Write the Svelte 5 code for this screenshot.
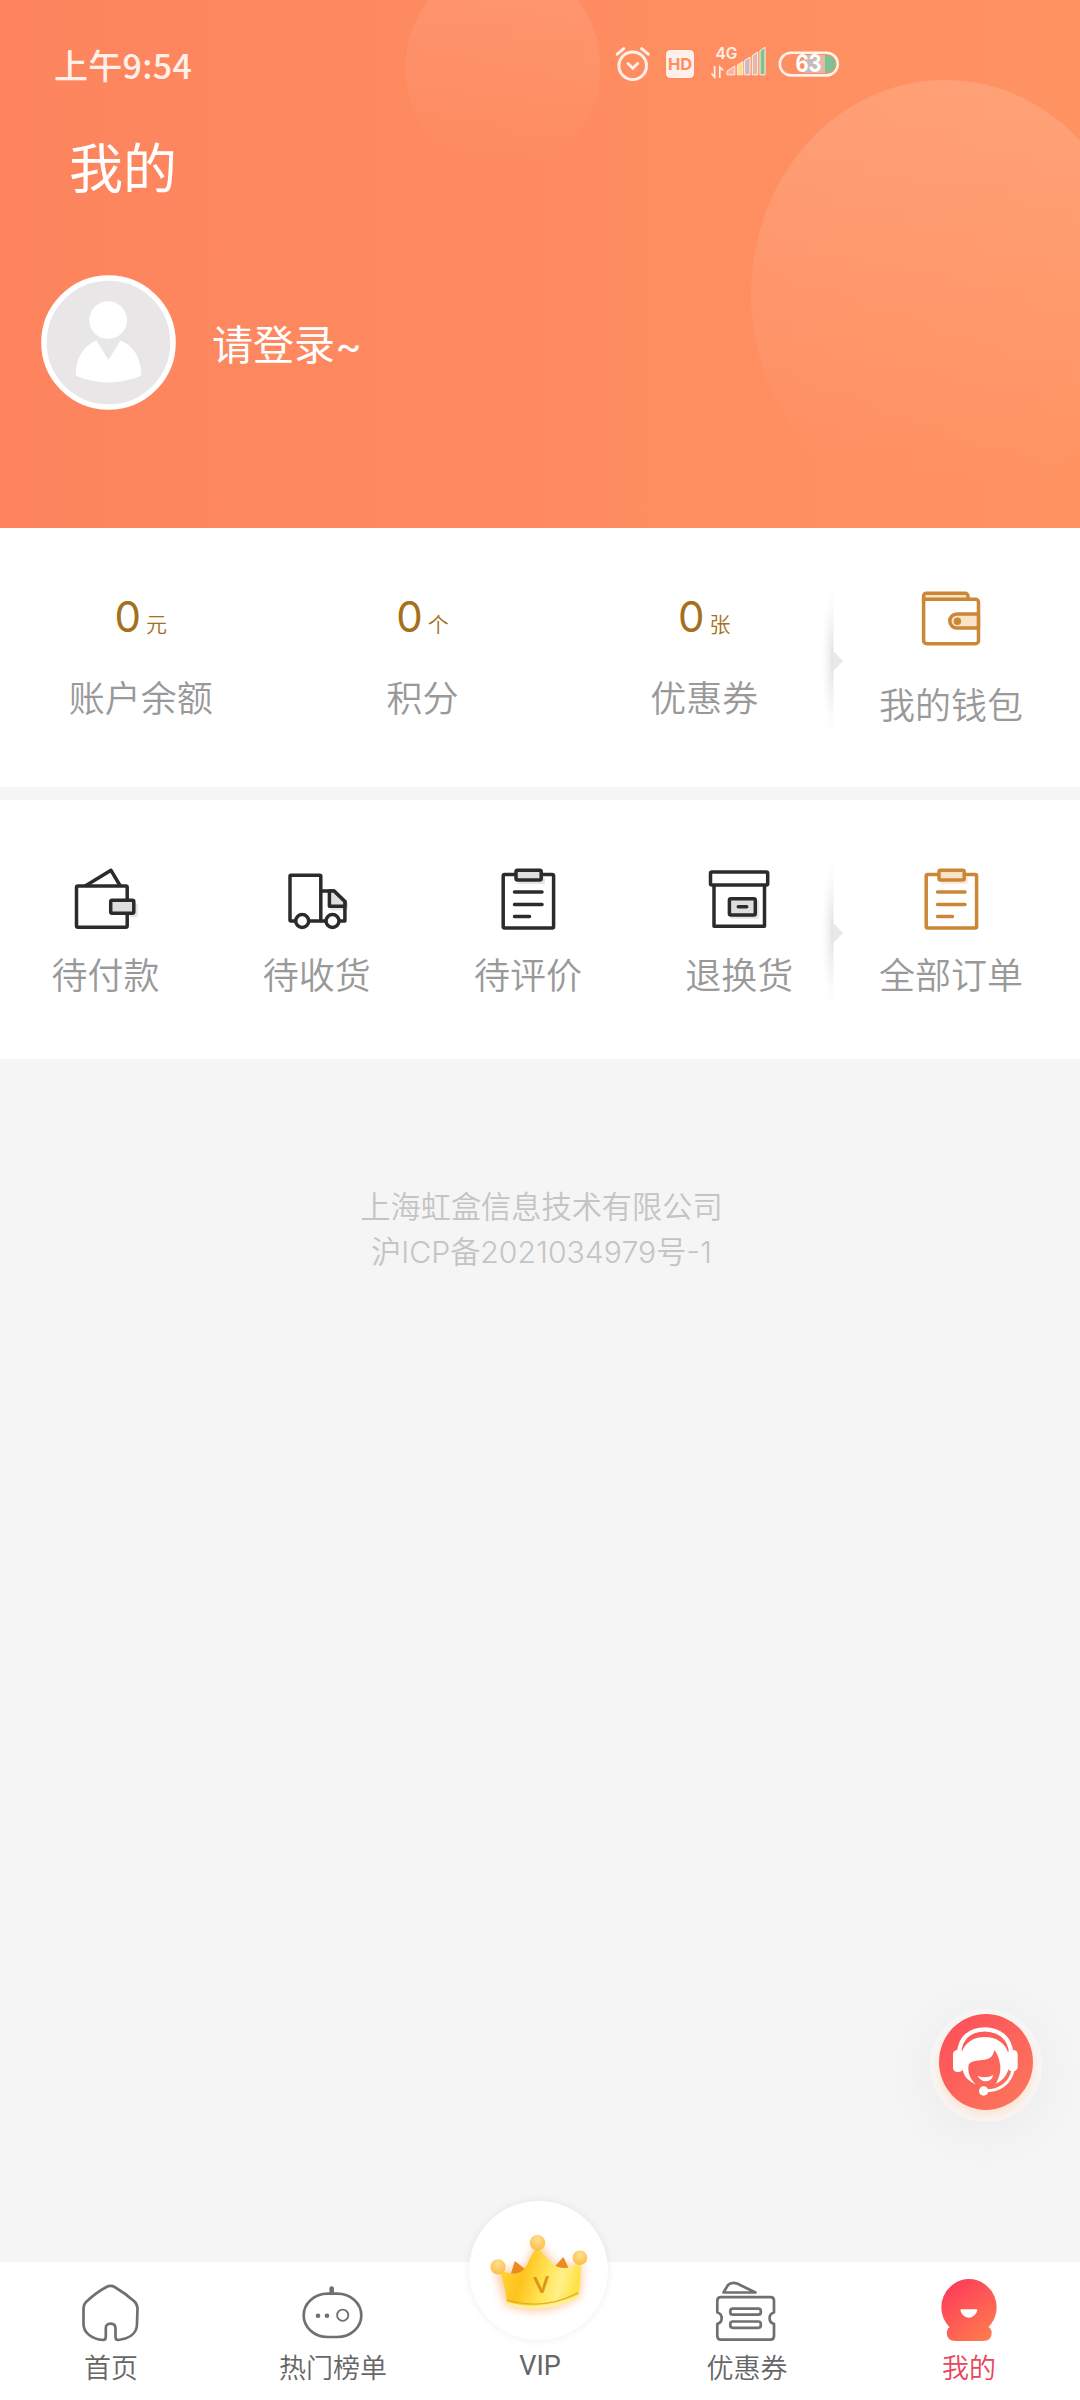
<script lang="ts">
  const assets = [
    { value: 0, unit: '元', label: '账户余额' },
    { value: 0, unit: '个', label: '积分' },
    { value: 0, unit: '张', label: '优惠券' },
  ];

  const orders = [
    { icon: 'pay', label: '待付款' },
    { icon: 'truck', label: '待收货' },
    { icon: 'review', label: '待评价' },
    { icon: 'refund', label: '退换货' },
  ];

  const tabs = [
    { id: 'home', label: '首页' },
    { id: 'hot', label: '热门榜单' },
    { id: 'vip', label: 'VIP' },
    { id: 'coupon', label: '优惠券' },
    { id: 'mine', label: '我的' },
  ];

  let active = $state('mine');
</script>

{#snippet clipboard()}
  <rect x="7.2" y="7.6" width="50.4" height="53.3" rx="1.5" />
  <path class="soft" d="M23 15.3H47.2V11.8" />
  <rect class="tint" x="20" y="3.3" width="25.2" height="9.8" rx="1.5" />
  <path d="M18.5 25H46M18.5 37.4H46M18.5 49.6H33.5" />
{/snippet}

{#snippet orderIcon(name: string)}
  <svg class="icon dark" viewBox="0 0 64 64">
    {#if name === 'pay'}
      <path d="M11.2 19 37 3.3 46.3 19" />
      <rect x="2.5" y="19" width="50.7" height="41.3" rx="1.5" />
      <path class="soft" d="M57 48.3h5V38" />
      <rect class="tint" x="36.7" y="33.3" width="23.1" height="13" rx="1.5" />
    {:else if name === 'truck'}
      <rect x="5" y="8.3" width="30.8" height="45.7" rx="1" />
      <path class="soft" d="M47 41.5h14.5v-5" />
      <path d="M35.8 24H49L59.9 34.5V54H35.8" />
      <path class="tint" d="M44.4 24H49L59.9 34.5V39.3H44.4z" />
      <circle cx="17.2" cy="54" r="6.5" />
      <circle cx="47.5" cy="54" r="6.5" />
    {:else if name === 'review'}
      {@render clipboard()}
    {:else}
      <path d="M7 17.7V59.3H57.5V17.7" />
      <rect x="3.5" y="5" width="57.2" height="12.9" rx="1.5" />
      <path class="soft" d="M25 50h25.500V35" />
      <rect class="tint" x="22.4" y="31.7" width="25.9" height="16.3" rx="1.5" />
      <path d="M31.3 39.8H39.7" />
    {/if}
  </svg>
{/snippet}

{#snippet fold()}
  <svg class="fold" viewBox="0 0 24 160">
    <defs>
      <radialGradient id="fold-shade" gradientUnits="userSpaceOnUse" cx="0" cy="0" r="1" gradientTransform="translate(13.5 80) scale(12 78)">
        <stop offset="0" stop-color="#000" stop-opacity="0.13" />
        <stop offset="0.35" stop-color="#000" stop-opacity="0.065" />
        <stop offset="0.7" stop-color="#000" stop-opacity="0.02" />
        <stop offset="1" stop-color="#000" stop-opacity="0" />
      </radialGradient>
    </defs>
    <rect x="0" y="0" width="13.5" height="160" fill="url(#fold-shade)" />
    <path d="M13.5 70 23 80 13.5 90z" fill="#e8e8e8" />
  </svg>
{/snippet}

<div class="page">
  <header class="hero">
    <svg class="bubbles" viewBox="0 0 1080 528">
      <defs>
        <linearGradient id="bubble" x1="0" y1="0" x2="0" y2="1">
          <stop offset="0" stop-color="#fff" stop-opacity="0.14" />
          <stop offset="0.95" stop-color="#fff" stop-opacity="0" />
        </linearGradient>
      </defs>
      <ellipse cx="503" cy="68" rx="97.5" ry="105" fill="url(#bubble)" opacity="0.75" />
      <ellipse cx="945" cy="294" rx="194" ry="214" fill="url(#bubble)" />
    </svg>

    <div class="status">
      <span class="time">上午9:54</span>
      <svg class="status-icons" viewBox="0 0 240 40" width="240" height="40">
        <g fill="none" stroke="#fff1ea" stroke-width="3" stroke-linecap="round">
          <circle cx="22.7" cy="25.8" r="13.8" />
          <path d="M18 23.5l4.8 4.7 4.8-4.7" />
          <path d="M7.2 14.2l6.6-5.6M38.2 14.2l-6.6-5.6" />
        </g>
        <rect x="56" y="10" width="28" height="28" rx="4.5" fill="#fff1ea" />
        <text class="hd" x="70" y="30.2" text-anchor="middle">HD</text>
        <text class="net" x="105.5" y="19.3">4G</text>
        <path d="M104.6 26v11l-3.2-3.5M109.8 38V27l3.4 3.5" fill="none" stroke="#fff1ea" stroke-width="1.7" />
        <g stroke="#fff1ea" stroke-width="1" stroke-linejoin="round">
          <path d="M117 34.8v-3.6l7.8-5.2v8.8z" fill="#fdb3a0" />
          <path d="M127.4 34.8V25l5.4-3.4v13.2z" fill="#ffdb8c" />
          <path d="M134.6 34.8V20.5l5.4-3.4v17.7z" fill="#cbbabd" />
          <path d="M142.3 34.8V15.5l5.4-3.4v22.7z" fill="#e2b9aa" />
          <path d="M150 34.8v-24l5-3.6v27.6z" fill="#7dc392" />
        </g>
        <path d="M194 15h14v18h-14z" fill="#cbbabd" />
        <path d="M208 15h7v18h-7z" fill="#e2b9aa" />
        <path d="M215 15h1.5a9 9 0 0 1 0 18H215z" fill="#7dc392" />
        <rect x="169.8" y="12.7" width="58" height="22.7" rx="11.3" fill="none" stroke="#fff1ea" stroke-width="2.6" />
        <text class="level" x="198.5" y="31.8" text-anchor="middle" textLength="26" lengthAdjust="spacingAndGlyphs">63</text>
      </svg>
    </div>

    <h1>我的</h1>

    <div class="profile">
      <svg class="avatar" viewBox="0 0 136 136">
        <circle cx="68" cy="68" r="65" fill="#e8e6e7" stroke="#fff" stroke-width="5.6" />
        <circle cx="67.6" cy="45.5" r="19" fill="#fff" />
        <path d="M56 66 68 85.5 80 66C93 71 101 83 101 101.5Q68 115 35 101.5C35 83 43 71 56 66z" fill="#fff" />
      </svg>
      <span class="login">请登录~</span>
    </div>
  </header>

  <section class="card assets">
    <div class="cells">
      {#each assets as item}
        <div class="cell">
          <div class="amount"><b>{item.value}</b><i>{item.unit}</i></div>
          <span class="label">{item.label}</span>
        </div>
      {/each}
    </div>
    <div class="cell more">
      {@render fold()}
      <svg class="icon gold" viewBox="0 0 64 64">
        <path class="tint" d="M4.6 14V9a2.700 2.700 0 0 1 2.700-2.700H46a3 3 0 0 1 3 3v3" />
        <path class="blank" d="M4.6 12.3H56.5a3 3 0 0 1 3 3V53.7a3 3 0 0 1-3 3H7.6a3 3 0 0 1-3-3z" />
        <path class="tint" d="M59.4 27H37.8a7 7 0 0 0 0 14H59.4z" />
        <circle cx="38.4" cy="34.2" r="2" fill="#c8822f" />
      </svg>
      <span class="label">我的钱包</span>
    </div>
  </section>

  <section class="card orders">
    <div class="cells">
      {#each orders as item}
        <div class="cell">
          {@render orderIcon(item.icon)}
          <span class="label">{item.label}</span>
        </div>
      {/each}
    </div>
    <div class="cell more">
      {@render fold()}
      <svg class="icon gold" viewBox="0 0 64 64">{@render clipboard()}</svg>
      <span class="label">全部订单</span>
    </div>
  </section>

  <footer class="company">
    <p>上海虹盒信息技术有限公司</p>
    <p class="icp">沪ICP备2021034979号-1</p>
  </footer>

  <button class="service" aria-label="客服">
    <svg viewBox="119 132 282 288">
      <g fill="none" stroke="#fff" stroke-linecap="round">
        <path d="M180 250C180 205 213 178 256 178S334 205 335 250" stroke-width="13" />
        <path d="M341 300C334 338 302 362 262 362" stroke-width="9" />
      </g>
      <rect x="161" y="240" width="30" height="66" rx="13" fill="#fff" />
      <rect x="325" y="240" width="30" height="64" rx="13" fill="#fff" />
      <path
        d="M186 250C196 218 222 201 256 201S318 218 327 250V300C318 322 306 334 290 341C302 318 305 300 302 282C299 262 292 248 285 240C282 262 268 268 250 270C228 272 214 274 208 284C204 306 212 326 229 343C207 334 192 318 188 292z"
        fill="#fff"
      />
      <path d="M235 317Q259 327 282 315Q277 334 258 334Q243 333 235 317z" fill="#fff" />
      <circle cx="253" cy="363" r="14" fill="#fff" />
    </svg>
  </button>

  <nav class="tabbar">
    {#each tabs as tab}
      <button class="tab {tab.id}" class:active={active === tab.id} onclick={() => (active = tab.id)}>
        {#if tab.id === 'vip'}
          <svg class="crown" viewBox="148 64 416 416">
            <defs>
              <linearGradient id="gold" x1="0" y1="0.2" x2="1" y2="0.4">
                <stop offset="0" stop-color="#ffd83a" />
                <stop offset="0.32" stop-color="#ffc31c" />
                <stop offset="0.62" stop-color="#ffe657" />
                <stop offset="0.8" stop-color="#fff08a" />
                <stop offset="1" stop-color="#ffe244" />
              </linearGradient>
              <radialGradient id="pearl" cx="0.5" cy="0.3" r="0.7">
                <stop offset="0" stop-color="#ffe08c" />
                <stop offset="1" stop-color="#fdbd4a" />
              </radialGradient>
              <filter id="glow" x="-30%" y="-30%" width="160%" height="170%">
                <feGaussianBlur stdDeviation="15" />
              </filter>
            </defs>
            <path d="M228 275 315 260 352 180 410 258 488 250 480 350Q370 425 255 372z" fill="#ff9a4a" opacity="0.5" filter="url(#glow)" />
            <path d="M274 285 286 246 318 272zM405 262 430 234 446 268z" fill="#ec8a1e" stroke="#ec8a1e" stroke-width="3" stroke-linejoin="round" />
            <path d="M238 270Q300 300 322 254Q336 220 352 205Q372 222 388 243Q425 285 482 246Q484 300 476 346Q370 402 262 370Q258 320 238 270z" fill="url(#gold)" />
            <path d="M261 360Q370 393 475 339" fill="none" stroke="#e5b020" stroke-width="4" />
            <path d="M262 371Q370 402 475 350" fill="none" stroke="#fff0a0" stroke-width="9" stroke-linecap="round" />
            <circle cx="353" cy="189" r="23" fill="url(#pearl)" />
            <circle cx="235" cy="261" r="23" fill="url(#pearl)" />
            <circle cx="480" cy="234" r="22" fill="url(#pearl)" />
            <text class="crown-v" x="365" y="339" text-anchor="middle" transform="rotate(-4 365 315)">V</text>
          </svg>
        {:else}
          <svg class="tab-icon" viewBox="0 0 64 64">
            {#if tab.id === 'home'}
              <path d="M27 7.2Q31.5 4.7 36 7.2Q46 13 55.5 21.5Q58.5 24.5 58.5 28.5L58 44C58 55 48 59 39 60Q36.5 60 36.5 56.5V48.5Q36.5 43.7 31.6 43.7T26.8 48.5V56.5Q26.8 60 24 60C13 59 4.5 53 4.5 44V28Q4.5 24.500 7 22Q17 12.500 27 7.200z" />
            {:else if tab.id === 'hot'}
              <rect x="2.7" y="13.7" width="57.6" height="43.3" rx="24" ry="21.6" />
              <path d="M30.7 8.5V13" stroke-width="4.6" />
              <circle class="dot" cx="17" cy="35.7" r="2.3" />
              <circle class="dot" cx="26" cy="35.7" r="2.3" />
              <circle cx="41.7" cy="35.2" r="5.6" stroke-width="1.8" />
            {:else if tab.id === 'coupon'}
              <path d="M8.5 12.5 13 5Q16.5 1.5 22 3.5L40.5 12.5z" />
              <path d="M6 17.2H55.5Q59 17.2 59 20.7V32.5A5.9 5.9 0 0 0 59 43.9V56Q59 59.6 55.5 59.6H6Q2.3 59.6 2.3 56V43.9A5.9 5.9 0 0 0 2.3 32.5V20.7Q2.3 17.2 6 17.2z" />
              <rect x="15.3" y="28.7" width="30.5" height="6" rx="2.5" />
              <rect x="15.3" y="41.5" width="30.5" height="6.3" rx="2.5" />
            {:else}
              <defs>
                <linearGradient id="mine" gradientUnits="userSpaceOnUse" x1="12" y1="8" x2="52" y2="58">
                  <stop offset="0" stop-color="#fd3f5a" />
                  <stop offset="1" stop-color="#ff7a4f" />
                </linearGradient>
              </defs>
              <g class="solid">
                <path d="M32-1A28.2 28.2 0 0 1 51.5 47Q54.7 49 54.7 52.5Q54.7 61 46 61H18.5Q9.7 61 9.7 52.5Q9.7 49 12.5 47A28.2 28.2 0 0 1 32-1z" fill="url(#mine)" />
                <path d="M24.5 29.3H39.3Q40.6 29.3 40.3 30.5C37.5 40 26 40 23.5 30.5Q23.2 29.3 24.5 29.3z" fill="#fff" />
              </g>
            {/if}
          </svg>
        {/if}
        <span>{tab.label}</span>
      </button>
    {/each}
  </nav>
</div>

<style>
  :global(body) {
    background: #f5f5f5;
  }
  .page {
    position: relative;
    width: 1080px;
    height: 2400px;
    display: flex;
    flex-direction: column;
    overflow: hidden;
    background: #f5f5f5;
    color: #999;
    font-family: 'Noto Sans CJK SC', sans-serif;
    font-weight: 350;
  }
  svg {
    display: block;
    overflow: visible;
  }
  button {
    border: 0;
    padding: 0;
    font: inherit;
    color: inherit;
  }

  .hero {
    position: relative;
    height: 528px;
    flex-shrink: 0;
    background: linear-gradient(90deg, #fd845e, #ff9362);
    color: #fff;
    overflow: hidden;
  }
  .bubbles {
    position: absolute;
    inset: 0;
  }
  .status,
  h1,
  .profile {
    position: relative;
  }
  .status {
    display: flex;
    align-items: flex-start;
    padding: 40px 0 0 54px;
    height: 90px;
    box-sizing: border-box;
  }
  .time {
    width: 556px;
    line-height: 49px;
    font-size: 34px;
    font-weight: 500;
    letter-spacing: 0.3px;
    color: #fff1ea;
  }
  .hd,
  .net,
  .level {
    font-family: Inter, sans-serif;
    font-weight: 700;
  }
  .hd {
    font-size: 16.5px;
    fill: #fd8d62;
  }
  .net {
    font-size: 15.5px;
    font-weight: 600;
    fill: #fff1ea;
  }
  .level {
    font-size: 24px;
    fill: #fff;
  }
  h1 {
    margin: 36px 0 0 69px;
    font-size: 54px;
    line-height: 80px;
    font-weight: 400;
  }
  .profile {
    display: flex;
    align-items: center;
    gap: 36px;
    margin: 69px 0 0 41px;
  }
  .avatar {
    width: 135px;
    height: 135px;
  }
  .login {
    font-family: Inter, 'Noto Sans CJK SC', sans-serif;
    font-size: 41px;
    font-weight: 400;
    line-height: 60px;
    padding-top: 5px;
  }

  .card {
    display: flex;
    flex-shrink: 0;
    background: #fff;
  }
  .assets {
    height: 259px;
    margin-bottom: 13px;
  }
  .orders {
    height: 259px;
  }
  .cells {
    width: 845px;
    display: flex;
  }
  .cell {
    flex: 1;
    display: flex;
    flex-direction: column;
    align-items: center;
  }
  .more {
    position: relative;
    flex: none;
    width: 212px;
  }
  .fold {
    position: absolute;
    left: -25px;
    top: 53px;
    width: 24px;
    height: 160px;
  }
  .label {
    font-size: 36px;
    line-height: 50px;
  }
  .amount {
    display: flex;
    align-items: baseline;
    gap: 5px;
    height: 60px;
    margin-top: 59px;
    line-height: 60px;
    color: #a5701c;
  }
  .amount b {
    font-family: Inter, sans-serif;
    font-size: 42px;
    font-weight: 400;
  }
  .amount i {
    font-size: 21px;
    line-height: 1;
    font-style: normal;
  }
  .assets .label {
    margin-top: 24px;
  }
  .assets .icon {
    margin-top: 59px;
  }
  .assets .more .label {
    margin-top: 27px;
  }
  .orders .icon {
    margin-top: 67px;
  }
  .orders .label {
    margin-top: 17px;
  }
  .icon {
    width: 64px;
    height: 64px;
    fill: none;
    stroke-width: 3.5;
    stroke-linecap: round;
    stroke-linejoin: round;
  }
  .dark {
    stroke: #2b2b2b;
  }
  .dark :is(rect, circle) {
    fill: #fff;
  }
  .dark .tint {
    fill: #dedede;
  }
  .dark .soft {
    stroke: #e4e4e4;
  }
  .gold {
    stroke: #cb8736;
  }
  .gold .tint {
    fill: #fae3c8;
  }
  .gold .blank {
    fill: #fff;
  }
  .gold .soft {
    stroke: #faeadb;
  }

  .company {
    margin-top: 126px;
    text-align: center;
    font-family: Inter, 'Noto Sans CJK SC', sans-serif;
    font-size: 30.2px;
    line-height: 45px;
    color: #c4c4c4;
    padding-left: 3px;
  }
  .company p {
    margin: 0;
  }

  .service {
    position: absolute;
    left: 930px;
    top: 2009px;
    width: 112px;
    height: 113px;
    padding: 5px 9px 12px;
    border-radius: 50%;
    background: radial-gradient(circle at 50% 52%, #ffd9bd 42%, #f9f3f0 64%, #f7f6f6 70%);
    box-shadow: 0 8px 60px rgba(0, 0, 0, 0.05);
  }
  .service svg {
    width: 94px;
    height: 96px;
    border-radius: 50%;
    background: linear-gradient(135deg, #fe4c59, #fc7a5c);
  }

  .tabbar {
    display: grid;
    grid-template-columns: 222px 222px 192px 222px 222px;
    margin-top: auto;
    height: 138px;
    background: #fff;
  }
  .tab {
    display: flex;
    flex-direction: column;
    align-items: center;
    background: none;
    font-size: 27px;
    line-height: 36px;
    color: #666;
  }
  .tab span {
    margin-top: 5px;
  }
  .tab.active {
    color: #e9455c;
  }
  .tab-icon {
    width: 64px;
    height: 64px;
    margin-top: 18px;
    fill: none;
    stroke: #707070;
    stroke-width: 2.7;
    stroke-linecap: round;
    stroke-linejoin: round;
  }
  .tab-icon .dot {
    fill: #707070;
    stroke: none;
  }
  .tab-icon .solid {
    stroke: none;
  }
  .vip {
    font-family: Roboto, sans-serif;
    font-weight: 400;
  }
  .crown {
    width: 139px;
    height: 139px;
    margin: -61px 3px 0 0;
    border-radius: 50%;
    background: #fff;
    box-shadow: 0 0 8px rgba(0, 0, 0, 0.07);
  }
  .tab.vip span {
    margin-top: 8px;
  }
  .crown-v {
    font-family: Lato, sans-serif;
    font-weight: 700;
    font-size: 68px;
    fill: #dd9417;
  }
</style>
